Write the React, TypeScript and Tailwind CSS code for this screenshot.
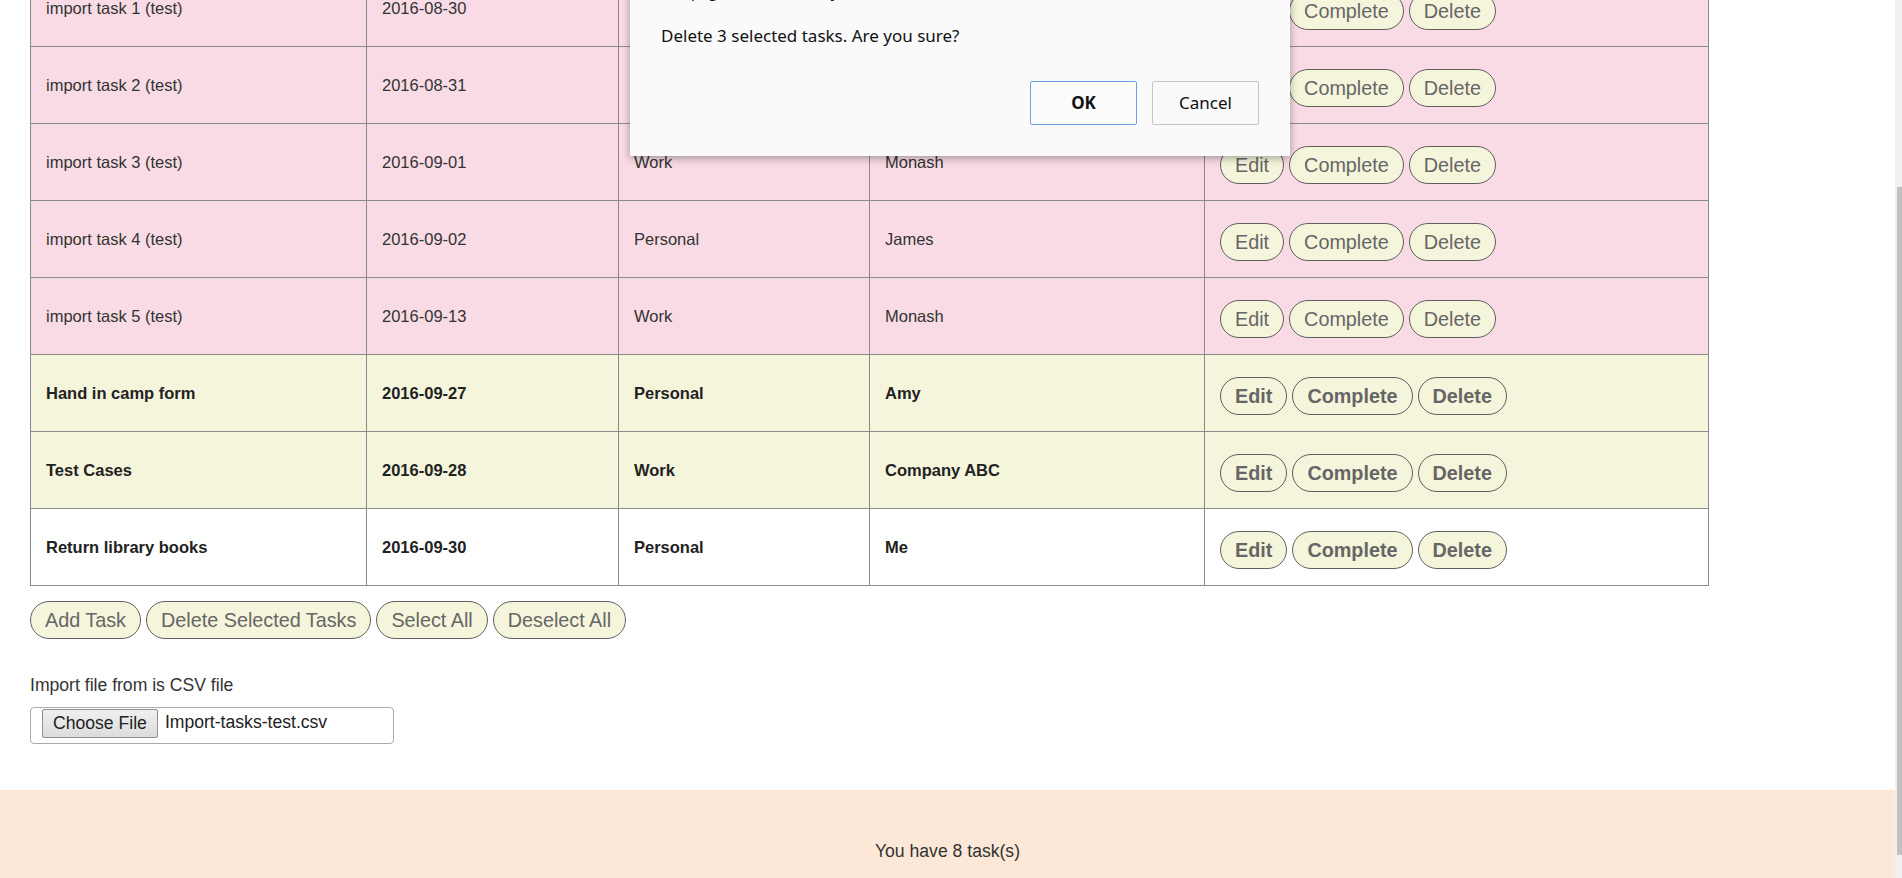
import React from 'react';

type Task = {
  name: string;
  date: string;
  category: string;
  with: string;
  bold: boolean;
  tone: 'pink' | 'beige' | 'white';
};

const tasks: Task[] = [
  { name: 'import task 1 (test)', date: '2016-08-30', category: 'Personal', with: 'James', bold: false, tone: 'pink' },
  { name: 'import task 2 (test)', date: '2016-08-31', category: 'Work', with: 'Monash', bold: false, tone: 'pink' },
  { name: 'import task 3 (test)', date: '2016-09-01', category: 'Work', with: 'Monash', bold: false, tone: 'pink' },
  { name: 'import task 4 (test)', date: '2016-09-02', category: 'Personal', with: 'James', bold: false, tone: 'pink' },
  { name: 'import task 5 (test)', date: '2016-09-13', category: 'Work', with: 'Monash', bold: false, tone: 'pink' },
  { name: 'Hand in camp form', date: '2016-09-27', category: 'Personal', with: 'Amy', bold: true, tone: 'beige' },
  { name: 'Test Cases', date: '2016-09-28', category: 'Work', with: 'Company ABC', bold: true, tone: 'beige' },
  { name: 'Return library books', date: '2016-09-30', category: 'Personal', with: 'Me', bold: true, tone: 'white' },
];

const toneClass = {
  pink: 'bg-[#f8dbe4]',
  beige: 'bg-[#f5f5dc]',
  white: 'bg-white',
};

const PillButton: React.FC<{ label: string; bold?: boolean }> = ({ label, bold }) => (
  <button
    className={`rounded-full border border-[#5f5f5f] bg-[#f5f5dc] px-[14px] py-[7px] text-[19.8px] leading-[22px] text-[#666] ${
      bold ? 'font-bold' : 'font-normal'
    }`}
  >
    {label}
  </button>
);

const cell = 'border border-[#8a8a8a] px-[15px] h-[77px] align-middle';

export default function App() {
  return (
    <div className="relative flex h-[878px] w-full overflow-hidden bg-white font-['Liberation_Sans',Arial,sans-serif]">
      <div className="flex-1 flex flex-col">
        {/* page is scrolled: top of table sits above the viewport */}
        <div className="-mt-[31px] pl-[30px]">
          <table className="w-[1678px] table-fixed border-collapse text-[16.5px] text-[#333]">
            <colgroup>
              <col className="w-[336px]" />
              <col className="w-[252px]" />
              <col className="w-[251px]" />
              <col className="w-[335px]" />
              <col className="w-[504px]" />
            </colgroup>
            <tbody>
              {tasks.map((t) => (
                <tr key={t.name} className={`${toneClass[t.tone]} ${t.bold ? 'font-bold text-[#222]' : ''}`}>
                  <td className={cell}>{t.name}</td>
                  <td className={cell}>{t.date}</td>
                  <td className={cell}>{t.category}</td>
                  <td className={cell}>{t.with}</td>
                  <td className={cell}>
                    <div className="mt-[6px] flex gap-[5px]">
                      <PillButton label="Edit" bold={t.bold} />
                      <PillButton label="Complete" bold={t.bold} />
                      <PillButton label="Delete" bold={t.bold} />
                    </div>
                  </td>
                </tr>
              ))}
            </tbody>
          </table>

          <div className="mt-[15px] flex gap-[5px]">
            <PillButton label="Add Task" />
            <PillButton label="Delete Selected Tasks" />
            <PillButton label="Select All" />
            <PillButton label="Deselect All" />
          </div>

          <p className="mt-[36px] text-[17.6px] leading-[20px] text-[#333]">Import file from is CSV file</p>

          <div className="mt-[12px] flex h-[37px] w-[364px] items-start gap-[7px] rounded-[4px] border border-[#ababab] pl-[11px] pt-[1px] text-[17.6px] text-[#222]">
            <span className="h-[29px] rounded-[2px] border border-[#8f8f8f] bg-gradient-to-b from-[#f0f0f0] to-[#dcdcdc] px-[10px] leading-[27px]">
              Choose File
            </span>
            <span className="leading-[27px]">Import-tasks-test.csv</span>
          </div>
        </div>

        <footer className="mt-[46px] flex-1 bg-[#fde8d8] pt-[51px] pb-[60px] text-center text-[17.6px] leading-[20px] text-[#333]">
          You have 8 task(s)
        </footer>
      </div>

      {/* scrollbar */}
      <div className="w-[7px] shrink-0 bg-[#f0f0f0] pt-[187px] pl-[2px]">
        <div className="h-[668px] bg-[#c1c1c1]" />
      </div>

      {/* browser confirm dialog */}
      <div className="absolute left-[630px] top-[-39px] w-[660px] bg-[#fafafa] px-[31px] pt-[20px] pb-[31px] font-['Noto_Sans','Open_Sans',sans-serif] text-[17px] text-[#111] shadow-[0_2px_8px_rgba(0,0,0,0.35)]">
        <div className="mb-[25px] h-[20px] leading-[20px] text-[15px]">The page at localhost says:</div>
        <div className="leading-[20px]">Delete 3 selected tasks. Are you sure?</div>
        <div className="mt-[35px] flex justify-end gap-[15px]">
          <button className="h-[44px] w-[107px] rounded-[2px] border border-[#6e9de4] bg-[#fcfcfc] font-bold text-[#111]">OK</button>
          <button className="h-[44px] w-[107px] rounded-[2px] border border-[#c6c6c6] bg-[#f9f9f9] text-[#111]">Cancel</button>
        </div>
      </div>
    </div>
  );
}
